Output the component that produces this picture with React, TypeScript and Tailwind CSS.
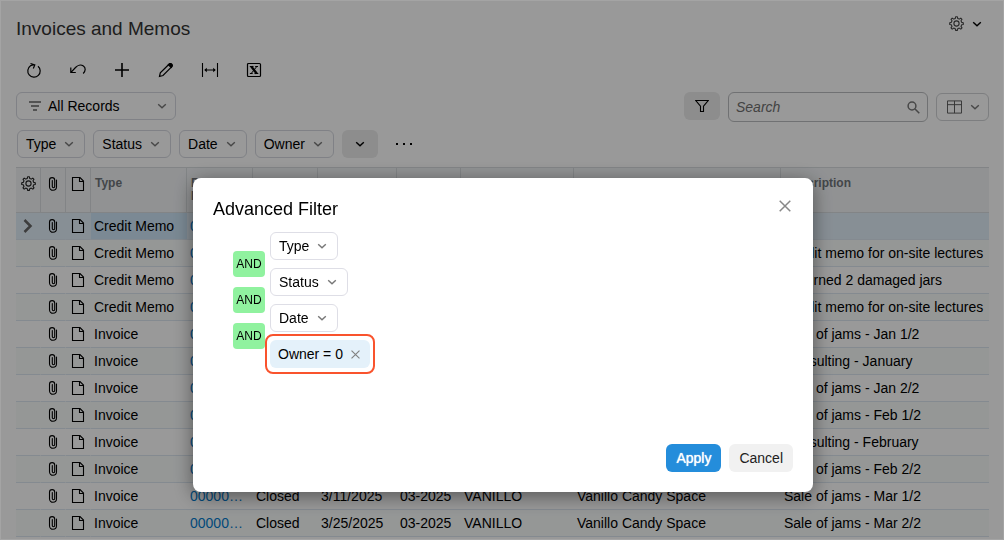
import type { ReactNode } from 'react';

type IconProps = { className?: string };

const Chevron = ({ className = 'text-[#777]' }: IconProps) => (
  <svg className={`shrink-0 ${className}`} width="10" height="10" viewBox="0 0 10 10" fill="none" stroke="currentColor" strokeWidth="1.4" aria-hidden="true">
    <path d="M1.2 3.200l3.800 3.600 3.800-3.600" />
  </svg>
);

const Gear = ({ className = '' }: IconProps) => (
  <svg className={className} width="15" height="15" viewBox="0 0 15 15" fill="none" stroke="currentColor" strokeWidth="1.1" strokeLinejoin="round" aria-hidden="true">
    <path d="M6.300 2.400L6.600.8h1.800l.3 1.600 1.600.7 1.500-1 1.200 1.200-1 1.500.7 1.600 1.600.3v1.800l-1.600.3-.7 1.600 1 1.500-1.200 1.200-1.500-1-1.600.7-.3 1.600H6.600l-.3-1.600-1.600-.7-1.500 1-1.200-1.200 1-1.500-.7-1.600-1.600-.3V6.700l1.600-.3.700-1.600-1-1.500 1.200-1.200 1.500 1z" />
    <circle cx="7.500" cy="7.500" r="2.600" />
  </svg>
);

const Clip = () => (
  <svg className="mx-auto" width="10" height="16" viewBox="0 0 10 16" fill="none" stroke="currentColor" strokeWidth="1.1" strokeLinecap="round" aria-hidden="true">
    <path d="M8.500 4v6.800a3.500 3.500 0 0 1-7 0V4.200a2.600 2.600 0 0 1 5.200 0v6.300a1.200 1.200 0 0 1-2.400 0V4.500" />
  </svg>
);

const Doc = () => (
  <svg className="mx-auto" width="14" height="16" viewBox="0 0 14 16" fill="none" stroke="currentColor" strokeWidth="1.1" aria-hidden="true">
    <path d="M1.500 1.500h7.500l3.500 3.500v9.500h-11zM8.500 1.500v4h4" />
  </svg>
);

const Cross = ({ size }: { size: number }) => (
  <svg className="shrink-0" width={size} height={size} viewBox="0 0 12 12" fill="none" stroke="currentColor" strokeWidth="1.5" aria-hidden="true">
    <path d="M.7.7l10.600 10.600M11.300.7L.7 11.300" />
  </svg>
);

const Tool = ({ label, children }: { label: string; children: ReactNode }) => (
  <button type="button" aria-label={label} className="flex h-7 w-9 items-center justify-center">
    <svg width="18" height="18" viewBox="0 0 18 18" fill="none" stroke="currentColor" strokeWidth="1.200" aria-hidden="true">
      {children}
    </svg>
  </button>
);

const Chip = ({ label, border }: { label: string; border: string }) => (
  <button type="button" className={`flex h-7 items-center gap-2 rounded-md border pr-2.5 pl-2 ${border}`}>
    <span>{label}</span>
    <Chevron />
  </button>
);

type Row = [string, string, string, string, string, string, string, string];

const rows: Row[] = [
  ['Credit Memo', '00000112', 'Open', '1/30/2025', '01-2025', 'GOODFOOD', 'GoodFood One Restaurant', ''],
  ['Credit Memo', '00000113', 'Closed', '1/30/2025', '01-2025', 'GOODFOOD', 'GoodFood One Restaurant', 'Credit memo for on-site lectures'],
  ['Credit Memo', '00000114', 'Closed', '1/30/2025', '01-2025', 'GOODFOOD', 'GoodFood One Restaurant', 'Returned 2 damaged jars'],
  ['Credit Memo', '00000115', 'Closed', '1/31/2025', '01-2025', 'GOODFOOD', 'GoodFood One Restaurant', 'Credit memo for on-site lectures'],
  ['Invoice', '00000101', 'Closed', '1/11/2025', '01-2025', 'VANILLO', 'Vanillo Candy Space', 'Sale of jams - Jan 1/2'],
  ['Invoice', '00000102', 'Closed', '1/25/2025', '01-2025', 'VANILLO', 'Vanillo Candy Space', 'Consulting - January'],
  ['Invoice', '00000103', 'Closed', '1/25/2025', '01-2025', 'VANILLO', 'Vanillo Candy Space', 'Sale of jams - Jan 2/2'],
  ['Invoice', '00000104', 'Closed', '2/11/2025', '02-2025', 'VANILLO', 'Vanillo Candy Space', 'Sale of jams - Feb 1/2'],
  ['Invoice', '00000105', 'Closed', '2/25/2025', '02-2025', 'VANILLO', 'Vanillo Candy Space', 'Consulting - February'],
  ['Invoice', '00000106', 'Closed', '2/25/2025', '02-2025', 'VANILLO', 'Vanillo Candy Space', 'Sale of jams - Feb 2/2'],
  ['Invoice', '00000107', 'Closed', '3/11/2025', '03-2025', 'VANILLO', 'Vanillo Candy Space', 'Sale of jams - Mar 1/2'],
  ['Invoice', '00000108', 'Closed', '3/25/2025', '03-2025', 'VANILLO', 'Vanillo Candy Space', 'Sale of jams - Mar 2/2'],
];

const headers = ['Type', 'Reference Nbr.', 'Status', 'Date', 'Post Period', 'Customer', 'Customer Name', 'Description'];

const headCell = 'border-y border-r border-[#d9dde0] last:border-r-0';
const iconCell = 'border-r border-b border-r-transparent border-b-[#dce6f0]';

function InvoiceTable() {
  return (
    <table className="mt-[9px] w-full table-fixed border-separate border-spacing-0 text-left">
      <colgroup>
        <col className="w-[25px]" />
        <col className="w-[25px]" />
        <col className="w-[25px]" />
        <col className="w-[96px]" />
        <col className="w-[66px]" />
        <col className="w-[65px]" />
        <col className="w-[79px]" />
        <col className="w-[64px]" />
        <col className="w-[113px]" />
        <col className="w-[207px]" />
        <col />
      </colgroup>
      <thead>
        <tr className="h-[46px] bg-[#f2f4f6] align-top text-xs text-[#70757a]">
          <th className={`${headCell} pt-2 text-[#222]`} aria-label="Settings"><Gear className="mx-auto" /></th>
          <th className={`${headCell} pt-2 text-black`} aria-label="Files"><Clip /></th>
          <th className={`${headCell} pt-2 text-black`} aria-label="Notes"><Doc /></th>
          {headers.map((h) => (
            <th key={h} className={`${headCell} px-1 pt-[9px] leading-[13px] font-bold`}>{h}</th>
          ))}
        </tr>
      </thead>
      <tbody>
        {rows.map((row, i) => (
          <tr key={row[1]} className={`h-[27px] ${i === 0 ? 'bg-[#e2eef8]' : i % 2 === 1 ? 'bg-[#f9fcfb]' : 'bg-white'}`}>
            <td className={`${iconCell} text-[#666]`}>
              {i === 0 && (
                <svg className="mx-auto" width="10" height="14" viewBox="0 0 10 14" fill="none" stroke="currentColor" strokeWidth="2.500" aria-label="Current row">
                  <path d="M1.500 1l6 6-6 6" />
                </svg>
              )}
            </td>
            <td className={iconCell}><Clip /></td>
            <td className={iconCell}><Doc /></td>
            {row.map((cell, c) => (
              <td
                key={headers[c]}
                className={`truncate border-b border-[#dce6f0] px-[3px] ${i === 0 && c === 0 ? 'bg-[#cde5f7]' : ''} ${c === 1 ? 'text-[#027acc]' : ''}`}
              >
                {c === 1 ? <a href="#invoice">{cell}</a> : cell}
              </td>
            ))}
          </tr>
        ))}
      </tbody>
    </table>
  );
}

function FilterDialog() {
  return (
    <div role="dialog" aria-modal="true" aria-labelledby="filter-title" className="flex min-h-[314px] w-[620px] flex-col rounded-lg bg-white p-5 shadow-[0_4px_20px_rgba(0,0,0,0.45)]">
      <div className="flex items-start justify-between">
        <h2 id="filter-title" className="text-lg leading-[22px]">Advanced Filter</h2>
        <button type="button" aria-label="Close" className="p-0.5 text-[#888]"><Cross size={12} /></button>
      </div>
      <div className="mt-3 flex gap-[5px] pl-5">
        <div className="flex flex-col gap-2.5 pt-[19px]">
          {['Type', 'Status', 'Date'].map((k) => (
            <button key={k} type="button" className="h-[26px] w-8 rounded bg-[#90f29f] text-xs">AND</button>
          ))}
        </div>
        <div className="flex flex-col items-start gap-2">
          <Chip label="Type" border="border-[#dedee6]" />
          <Chip label="Status" border="border-[#dedee6]" />
          <Chip label="Date" border="border-[#dedee6]" />
          <div className="relative flex h-7 items-center gap-2 rounded-md bg-[#e4f1fa] pr-2.5 pl-2">
            <button type="button">Owner = 0</button>
            <button type="button" aria-label="Remove Owner condition" className="text-[#808080]"><Cross size={9} /></button>
            <span className="pointer-events-none absolute -inset-x-[5px] -inset-y-1.5 rounded-lg border-2 border-[#f9532d]" />
          </div>
        </div>
      </div>
      <div className="mt-auto flex justify-end gap-2">
        <button type="button" className="h-7 rounded-md bg-[#248ddb] px-2.5 text-white [text-shadow:0_0_1px_#fff]">Apply</button>
        <button type="button" className="h-7 rounded-md bg-[#f1f1f1] px-2.5 text-[#222]">Cancel</button>
      </div>
    </div>
  );
}

export default function App() {
  return (
    <div className="h-screen overflow-hidden bg-white font-['Liberation_Sans',Arial,sans-serif] text-sm text-black">
      <main className="pr-[15px] pl-4">
        <header className="flex h-14 items-start justify-between">
          <h1 className="pt-[17px] text-[19px] leading-6 text-[#333]">Invoices and Memos</h1>
          <button type="button" aria-label="Settings" className="flex items-center gap-2 pt-4 pr-[7px] text-[#444]">
            <Gear />
            <Chevron className="text-black" />
          </button>
        </header>

        <div className="flex gap-2" role="toolbar" aria-label="Actions">
          <Tool label="Refresh">
            <path d="M13 5.200A6.200 6.200 0 1 1 5.500 4.800C6.800 4 8 3.800 9.500 4M5.500 2.500l4.300 1.400-1.500 3.700" />
          </Tool>
          <Tool label="Undo">
            <path d="M1.800 6.500v5h5M2 11.300l4.500-4.800C8.500 4.200 11.800 3.200 14.400 5c2.500 1.800 2.300 5-.2 7.500" />
          </Tool>
          <Tool label="Add">
            <path d="M9 2v14M2 9h14" strokeWidth="1.600" />
          </Tool>
          <Tool label="Edit">
            <path d="M2.500 15.500l.8-3.700 8.700-8.600q1.300-1.200 2.600 0 1.200 1.300 0 2.600L6 14.500z" />
            <path d="M11.300 3.800q1.800-2 3.400-.6 1.500 1.500-.5 3.300z" fill="currentColor" />
          </Tool>
          <Tool label="Fit columns">
            <path d="M1.500 2v14M16.500 2v14M4 9h10" strokeWidth="1.100" />
            <path d="M3.200 9l2.600-2.200v4.400zM14.800 9l-2.600-2.200v4.400z" fill="currentColor" stroke="none" />
          </Tool>
          <Tool label="Export to Excel">
            <rect x="2.500" y="2.500" width="13" height="13" rx="1" />
            <path d="M6.300 5.500l5.400 7" strokeWidth="2.300" />
            <path d="M11.800 5.500l-5.600 7M4.800 5.500h3.700M10.200 5.500h2.800M4.900 12.500h2.800M9.500 12.500h3.800" strokeWidth="1" />
          </Tool>
        </div>

        <div className="mt-2 flex items-start gap-2">
          <button type="button" className="flex h-7 w-40 items-center gap-1.5 rounded-md border border-[#d5d8df] pr-2 pl-[11px]">
            <svg width="14" height="12" viewBox="0 0 14 12" fill="none" stroke="#666" strokeWidth="1.700" aria-hidden="true">
              <path d="M1 2h12M3 6h8M5 10h4" />
            </svg>
            <span>All Records</span>
            <span className="ml-auto"><Chevron /></span>
          </button>
          <button type="button" aria-label="Filter" className="ml-auto flex h-7 w-9 items-center justify-center rounded-md bg-[#ebebeb]">
            <svg width="14" height="14" viewBox="0 0 14 14" fill="none" stroke="currentColor" strokeWidth="1.100" aria-hidden="true">
              <path d="M.8 1.500h12.400L8.500 7.200v5.300h-3V7.200z" />
            </svg>
          </button>
          <label className="flex h-[30px] w-[200px] items-center rounded-md border border-[#bbbdc0] px-[7px]">
            <input type="search" aria-label="Search" placeholder="Search" className="min-w-0 flex-1 italic outline-none placeholder:text-[#707070]" />
            <svg width="13" height="13" viewBox="0 0 13 13" fill="none" stroke="#777" strokeWidth="1.500" aria-hidden="true">
              <circle cx="5" cy="5" r="3.900" />
              <path d="M8 8l4.300 4.300" />
            </svg>
          </label>
          <button type="button" aria-label="View" className="mt-px flex h-7 w-[53px] items-center gap-2 rounded-md border border-[#d0d2d5] pr-2 pl-2.5 text-[#555]">
            <svg width="16" height="14" viewBox="0 0 16 14" fill="none" stroke="currentColor" aria-hidden="true">
              <path d="M.5.5h15v13H.5zM.5 4.500h15M8 .5v13" />
            </svg>
            <Chevron />
          </button>
        </div>

        <div className="mt-2 flex items-center gap-2 pl-px">
          <Chip label="Type" border="border-[#d5d8df]" />
          <Chip label="Status" border="border-[#d5d8df]" />
          <Chip label="Date" border="border-[#d5d8df]" />
          <Chip label="Owner" border="border-[#d5d8df]" />
          <button type="button" aria-label="More filters" className="flex h-7 w-9 items-center justify-center rounded-md bg-[#ebebeb]">
            <Chevron className="text-black" />
          </button>
          <button type="button" aria-label="More actions" className="flex h-7 w-9 items-center justify-center">
            <svg width="16" height="2" viewBox="0 0 16 2" fill="currentColor" aria-hidden="true">
              <path d="M0 0h2v2H0zM7 0h2v2H7zM14 0h2v2h-2z" />
            </svg>
          </button>
        </div>

        <InvoiceTable />
      </main>

      <div className="fixed inset-0 flex items-start justify-center border border-white/10 bg-black/40 pt-[177px] pl-0.5">
        <FilterDialog />
      </div>
    </div>
  );
}
